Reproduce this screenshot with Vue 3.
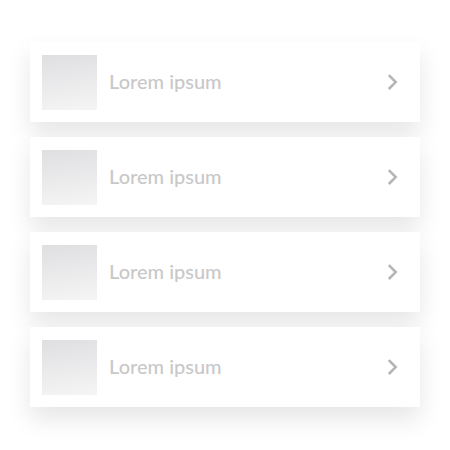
<script setup>
const items = [
  { id: 1, label: 'Lorem ipsum' },
  { id: 2, label: 'Lorem ipsum' },
  { id: 3, label: 'Lorem ipsum' },
  { id: 4, label: 'Lorem ipsum' },
]
</script>

<template>
  <ul class="list">
    <li v-for="item in items" :key="item.id">
      <a class="card" href="#">
        <span class="thumb"></span>
        <span class="label">{{ item.label }}</span>
        <svg class="chevron" viewBox="0 0 12 18" aria-hidden="true">
          <path d="M1.8 2.2 L8.7 9.1 L1.8 16" />
        </svg>
      </a>
    </li>
  </ul>
</template>

<style>
body {
  background: #fff;
}
</style>

<style scoped>
.list {
  display: flex;
  flex-direction: column;
  gap: 15px;
  margin: 0;
  padding: 42px 30px;
  list-style: none;
}

.card {
  display: flex;
  align-items: center;
  gap: 12px;
  box-sizing: border-box;
  min-height: 80px;
  padding: 12px 21px 12px 12px;
  background: #fff;
  box-shadow: 0 12px 23px rgba(0, 0, 0, 0.1);
  color: #c8c8c9;
  font-family: Lato, "Liberation Sans", sans-serif;
  font-size: 20px;
  font-weight: 500;
  line-height: 24px;
  text-decoration: none;
}

.thumb {
  flex: none;
  width: 55px;
  height: 55px;
  background: linear-gradient(172deg, #dfdfe2, #f5f5f5);
}

.label {
  flex: 1;
  padding-bottom: 2px;
}

.chevron {
  flex: none;
  width: 12px;
  height: 18px;
  fill: none;
  stroke: #b4b4b7;
  stroke-width: 2.5;
}
</style>
